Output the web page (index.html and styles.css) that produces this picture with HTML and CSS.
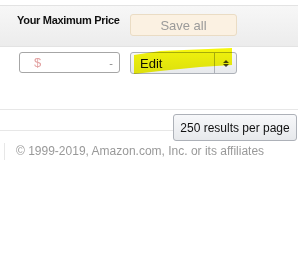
FILE: index.html
```html
<!DOCTYPE html>
<html>
<head>
<meta charset="utf-8">
<link rel="stylesheet" href="styles.css">
</head>
<body>
<div class="header">
  <div class="label">Your Maximum Price</div>
  <button class="save">Save all</button>
</div>
<div class="row">
  <div class="price"><span class="dollar">$</span><span class="dash">-</span></div>
  <div class="select"><span class="sel-text">Edit</span><span class="sel-arrow"><svg width="6" height="9" viewBox="0 0 6 9"><path d="M0 4 L3 1 L6 4 Z M0 5 L3 8 L6 5 Z" fill="#444"/></svg></span></div>
</div>
<div class="pager">
  <div class="pager-line"></div>
  <button class="per-page">250 results per page</button>
</div>
<div class="footer">© 1999-2019, Amazon.com, Inc. or its affiliates</div>
<svg class="marker" width="298" height="256" viewBox="0 0 298 256"><polygon points="134,55 160,51 232,48 232,65 200,67 160,71 134,74" fill="#f4f500" fill-opacity="0.95"/></svg>
</body>
</html>
```
FILE: styles.css
```css
body {
  margin: 0;
  font-family: "Liberation Sans", Arial, sans-serif;
  background: #fff;
  position: relative;
  width: 298px;
  height: 256px;
  overflow: hidden;
}
.header {
  margin-top: 5px;
  height: 40px;
  border-top: 1px solid #e3e3e3;
  border-bottom: 1px solid #e3e3e3;
  background: linear-gradient(#f7f7f7, #ececec);
  display: flex;
  align-items: flex-start;
}
.label {
  margin-left: 17px;
  margin-top: 7px;
  width: 113px;
  white-space: nowrap;
  font-weight: bold;
  font-size: 11px;
  letter-spacing: -0.3px;
  line-height: 14px;
  color: #111;
}
.save {
  margin-top: 8px;
  width: 107px;
  height: 22px;
  border: 1px solid #eadcc4;
  border-radius: 3px;
  background: #fbf1e2;
  color: #9a9a9a;
  font-family: "Liberation Sans", Arial, sans-serif;
  font-size: 13px;
  padding: 0;
}
.row {
  display: flex;
  padding-top: 5px;
  height: 22px;
}
.price {
  margin-left: 19px;
  width: 101px;
  height: 21px;
  box-sizing: border-box;
  border: 1px solid #a6a6a6;
  border-radius: 3px;
  display: flex;
  align-items: center;
  justify-content: space-between;
  padding: 0 6px 0 14px;
  font-size: 13px;
}
.dollar { color: #e2a0a0; }
.dash { color: #888; font-size: 11px; }
.select {
  margin-left: 10px;
  width: 107px;
  height: 22px;
  box-sizing: border-box;
  border: 1px solid #adb1b8;
  border-radius: 3px;
  background: linear-gradient(#f7f8fa, #e7e9ec);
  display: flex;
  font-size: 13px;
  color: #111;
}
.sel-text {
  flex: 1;
  padding-left: 9px;
  display: flex;
  align-items: center;
}
.sel-arrow {
  width: 21px;
  border-left: 1px solid #adb1b8;
  display: flex;
  align-items: center;
  justify-content: center;
}
.pager {
  margin-top: 35px;
  border-top: 1px solid #e7e7e7;
  display: flex;
  align-items: flex-start;
}
.pager-line {
  flex: 1;
  height: 20px;
  border-bottom: 1px solid #e7e7e7;
}
.per-page {
  margin-top: 4px;
  margin-right: 1px;
  width: 124px;
  height: 27px;
  border: 1px solid #adb1b8;
  border-radius: 3px;
  background: linear-gradient(#f7f8fa, #e7e9ec);
  color: #111;
  font-family: "Liberation Sans", Arial, sans-serif;
  font-size: 12px;
  padding: 0;
}
.footer {
  margin-top: 2px;
  margin-left: 4px;
  border-left: 1px solid #e7e7e7;
  padding-left: 11px;
  height: 17px;
  line-height: 17px;
  font-size: 12px;
  color: #999;
}
.marker {
  position: absolute;
  left: 0;
  top: 0;
  pointer-events: none;
  mix-blend-mode: multiply;
}
```
